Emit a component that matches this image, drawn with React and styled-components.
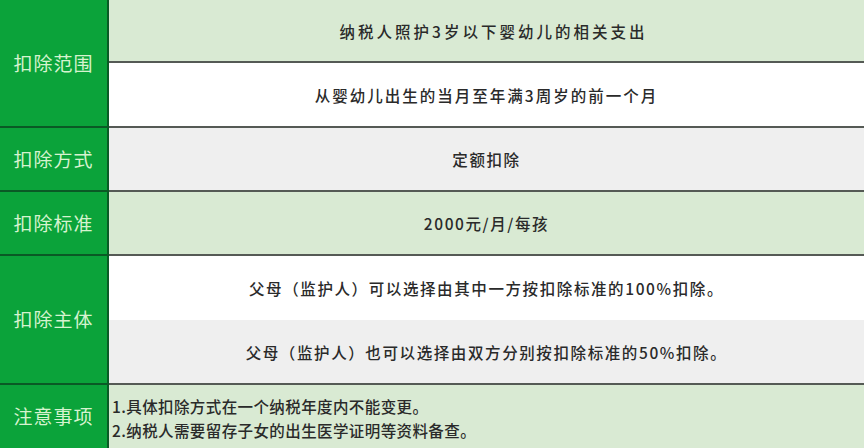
import React from 'react';
import styled, {createGlobalStyle} from 'styled-components';

const GlobalStyle = createGlobalStyle`
  html, body {
    margin: 0;
    padding: 0;
    background: #ffffff;
  }
  body {
    font-family: 'Noto Sans CJK SC', 'Noto Sans', sans-serif;
  }
`;

const Line = '#555a55';
const Green = '#0ba33a';
const LightGreen = '#d9ead3';
const Gray = '#efefef';

const rows = [
  {
    label: '扣除范围',
    cells: [
      {text: '纳税人照护3岁以下婴幼儿的相关支出', bg: LightGreen, h: 61, shift: 14, spacing: 3},
      {text: '从婴幼儿出生的当月至年满3周岁的前一个月', bg: '#ffffff', h: 63, spacing: 2},
    ],
  },
  {label: '扣除方式', cells: [{text: '定额扣除', bg: Gray, h: 62}]},
  {label: '扣除标准', cells: [{text: '2000元/月/每孩', bg: LightGreen, h: 62}]},
  {
    label: '扣除主体',
    cells: [
      {text: '父母（监护人）可以选择由其中一方按扣除标准的100%扣除。', bg: '#ffffff', h: 64, noLine: true},
      {text: '父母（监护人）也可以选择由双方分别按扣除标准的50%扣除。', bg: Gray, h: 63},
    ],
  },
];

const App = () => {
  return (
    <>
      <GlobalStyle />
      <Table>
        {rows.map((row, i) => (
          <Section key={i}>
            <Label $line>{row.label}</Label>
            <Body>
              {row.cells.map((c, j) => (
                <Cell key={j} $bg={c.bg} $h={c.h} $line={!c.noLine}>
                  <CellText $shift={c.shift} $spacing={c.spacing}>{c.text}</CellText>
                </Cell>
              ))}
            </Body>
          </Section>
        ))}
        <Section>
          <Label>注意事项</Label>
          <Body>
            <Notes>
              <Note>1.具体扣除方式在一个纳税年度内不能变更。</Note>
              <Note>2.纳税人需要留存子女的出生医学证明等资料备查。</Note>
            </Notes>
          </Body>
        </Section>
      </Table>
    </>
  );
};

const Table = styled.div`
  width: 864px;
  height: 448px;
  display: flex;
  flex-direction: column;
  overflow: hidden;
`;

const Section = styled.div`
  display: flex;
`;

const Label = styled.div`
  width: 109px;
  flex-shrink: 0;
  background: ${Green};
  border-right: 2px solid #0a5a25;
  border-bottom: ${p => (p.$line ? '2px solid #0a5a25' : 'none')};
  display: flex;
  align-items: center;
  justify-content: center;
  color: #d6f3cf;
  font-size: 19px;
  letter-spacing: 1px;
  padding-bottom: 2px;
  box-sizing: border-box;
`;

const Body = styled.div`
  flex: 1;
  display: flex;
  flex-direction: column;
`;

const Cell = styled.div`
  height: ${p => p.$h}px;
  background: ${p => p.$bg};
  border-bottom: ${p => (p.$line ? `2px solid ${Line}` : 'none')};
  display: flex;
  align-items: center;
  justify-content: center;
`;

const CellText = styled.span`
  font-size: 15.5px;
  font-weight: 500;
  color: #2a2a2a;
  letter-spacing: ${p => p.$spacing ?? 1.6}px;
  margin-left: ${p => p.$shift ?? 0}px;
`;

const Notes = styled.div`
  height: 63px;
  background: ${LightGreen};
  display: flex;
  flex-direction: column;
  justify-content: center;
  padding-left: 3px;
  padding-top: 2px;
  box-sizing: border-box;
`;

const Note = styled.div`
  font-size: 15.5px;
  font-weight: 500;
  color: #2a2a2a;
  line-height: 24px;
  letter-spacing: 0.4px;
`;

export default App;
